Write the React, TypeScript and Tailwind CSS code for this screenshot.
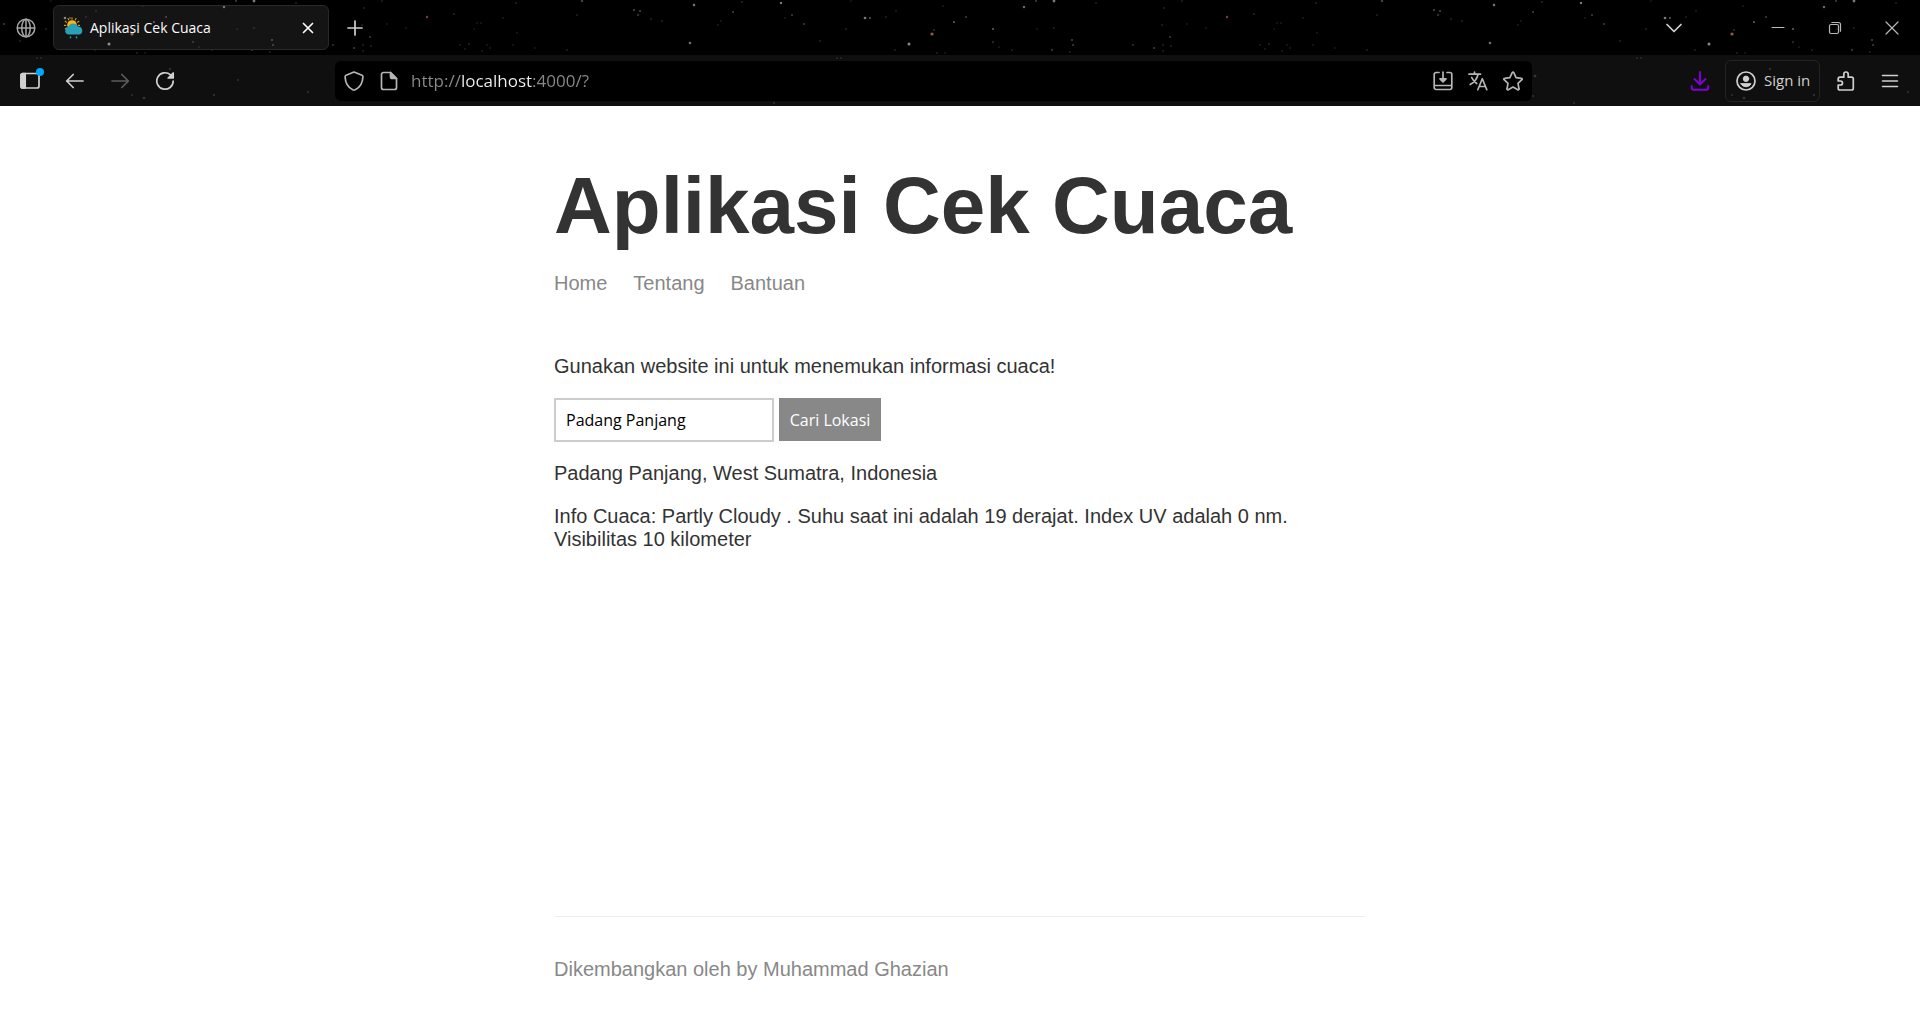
import React, { useState } from "react";

type IconProps = { className?: string; children: React.ReactNode; box?: string };

function Icon({ className = "size-5", children, box = "0 0 20 20" }: IconProps) {
  return (
    <svg
      viewBox={box}
      className={className}
      fill="none"
      stroke="currentColor"
      strokeWidth="1.7"
      strokeLinecap="round"
      strokeLinejoin="round"
      aria-hidden="true"
    >
      {children}
    </svg>
  );
}

// x, y, radius, colour; the sky repeats every 800px
const stars: [number, number, number, string][] = [
  [427, 17, 1.2, "#8a5040"], [387, 24, 0.8, "#333"], [454, 14, 0.8, "#444"], [477, 23, 0.8, "#333"],
  [481, 23, 0.8, "#333"], [503, 18, 0.8, "#3a3a3a"], [516, 3, 0.8, "#444"], [517, 33, 0.8, "#3a3a3a"],
  [474, 29, 0.8, "#2c2c2c"], [577, 15, 0.8, "#444"], [582, 1, 1, "#777"], [460, 45, 0.8, "#3a3a3a"],
  [469, 44, 0.8, "#4a4a4a"], [465, 49, 0.8, "#333"], [482, 51, 0.8, "#333"], [487, 45, 0.8, "#333"],
  [490, 48, 0.8, "#333"], [513, 45, 0.8, "#333"], [535, 48, 0.8, "#333"], [567, 50, 0.8, "#444"],
  [634, 10, 1, "#666"], [640, 11, 0.9, "#666"], [638, 15, 0.9, "#555"], [694, 5, 1.2, "#999"],
  [690, 43, 1.3, "#888"], [651, 19, 0.8, "#444"], [662, 21, 0.8, "#444"], [733, 12, 1, "#555"],
  [742, 2, 0.8, "#444"], [781, 3, 1.2, "#999"], [721, 21, 0.8, "#3a3a3a"], [718, 25, 0.8, "#3a3a3a"],
  [792, 15, 0.9, "#555"], [785, 18, 0.8, "#333"], [4, 24, 0.9, "#555"], [65, 18, 1.3, "#999"],
  [70, 18, 1, "#666"], [86, 17, 0.8, "#444"], [46, 29, 0.8, "#444"], [20, 41, 0.8, "#444"],
  [51, 1, 0.8, "#333"], [96, 11, 0.8, "#3a3a3a"], [143, 6, 0.8, "#3a3a3a"], [154, 22, 1, "#777"],
  [166, 17, 0.9, "#555"], [132, 34, 1.6, "#b5705c"], [134, 30, 0.8, "#666"], [109, 44, 1.5, "#aaa"],
  [95, 50, 0.8, "#444"], [137, 53, 0.8, "#444"], [145, 53, 0.8, "#333"], [193, 29, 1.1, "#777"],
  [193, 42, 0.9, "#444"], [199, 47, 0.8, "#333"], [212, 50, 0.8, "#444"], [224, 7, 1.2, "#888"],
  [236, 1, 0.9, "#555"], [254, 1, 1.4, "#999"], [296, 3, 0.8, "#444"], [254, 28, 0.8, "#444"],
  [237, 29, 0.8, "#333"], [272, 40, 1, "#555"], [273, 45, 0.9, "#555"], [252, 50, 0.9, "#555"],
  [270, 52, 0.8, "#444"], [333, 45, 0.9, "#444"], [354, 48, 0.9, "#555"], [362, 25, 0.8, "#444"],
  [370, 37, 0.9, "#555"], [363, 45, 0.8, "#444"], [371, 46, 0.8, "#444"], [363, 51, 0.8, "#444"],
  [364, 8, 0.8, "#444"], [382, 1, 0.8, "#444"], [406, 28, 0.8, "#333"],
  [238, 80, 1, "#2c2c2c"], [308, 92, 1.1, "#302b2b"], [214, 95, 1.1, "#363636"], [144, 98, 1.3, "#3a302e"],
  [37, 58, 0.9, "#2c2c2c"], [170, 69, 1.1, "#333"], [735, 76, 1.3, "#462f2d"], [132, 95, 1, "#2c2c2c"],
  [41, 58, 0.9, "#2a2a2a"], [733, 96, 1, "#303030"], [774, 103, 1, "#2e2e2e"], [539, 100, 1, "#333"],
];

function StarrySky() {
  return (
    <svg className="pointer-events-none absolute inset-0 size-full" aria-hidden="true">
      <defs>
        <pattern id="sky" width="800" height="106" patternUnits="userSpaceOnUse">
          {stars.map(([x, y, r, fill], i) => (
            <circle key={i} cx={x} cy={y} r={r} fill={fill} opacity="0.8" />
          ))}
        </pattern>
      </defs>
      <rect width="100%" height="100%" fill="url(#sky)" />
    </svg>
  );
}

function WeatherIcon() {
  return (
    <svg viewBox="0 0 20 22" className="h-[22px] w-5" aria-hidden="true">
      <g stroke="#d9a017" strokeWidth="1.1" strokeLinecap="round">
        <path d="M8 2.3V.8M11.3 3l.7-1.4M4.8 3l-.7-1.4M2.5 5.2 1.2 4.3M1.8 8.4H.5M2.5 11l-1.2.7M13.6 5.2l1.2-.9M14.2 8.4h1.4" />
      </g>
      <circle cx="8" cy="8" r="4.8" fill="#fdb515" />
      <path
        d="M4.7 17.6a3.8 3.8 0 0 1-.5-7.5 5.2 5.2 0 0 1 9.6-.6 4.2 4.2 0 0 1 1.8 8.1z"
        fill="#2a9fb8"
      />
      <path d="M6.500 20v.8M12.500 20v.8" stroke="#2a9fb8" strokeWidth="1.5" strokeLinecap="round" />
    </svg>
  );
}

function IconButton({
  label,
  className = "",
  children,
}: {
  label: string;
  className?: string;
  children: React.ReactNode;
}) {
  return (
    <button type="button" aria-label={label} className={`flex shrink-0 items-center justify-center ${className}`}>
      {children}
    </button>
  );
}

function TabStrip() {
  return (
    <div className="relative flex h-[55px] items-center">
      <IconButton label="Workspaces" className="ml-4 size-5 text-[#a5a5a5]">
        <Icon>
          <g strokeWidth="1.5">
            <circle cx="10" cy="10" r="8.800" />
            <ellipse cx="10" cy="10" rx="4.200" ry="8.800" />
            <path d="M1.500 10h17M10 1.200v17.600" />
          </g>
        </Icon>
      </IconButton>
      <div className="ml-[17px] flex h-[45px] w-[276px] items-center rounded-md border border-[#292929] bg-white/8 px-2.5">
        <WeatherIcon />
        <span className="ml-1.5 flex-1 text-sm text-[#fbfbfe]">Aplikasi Cek Cuaca</span>
        <IconButton label="Close tab" className="size-5 text-[#fbfbfe]">
          <Icon>
            <path d="m5.500 5.500 9 9m0-9-9 9" />
          </Icon>
        </IconButton>
      </div>
      <IconButton label="New tab" className="ml-4 size-5 text-[#d0d0d0]">
        <Icon>
          <path d="M10 3v14M3 10h14" />
        </Icon>
      </IconButton>
      <div className="ml-auto flex items-center text-[#b8b8b8]">
        <IconButton label="List all tabs" className="mr-[65px] size-5 text-[#d0d0d0]">
          <Icon>
            <path d="m3 6.500 7 7 7-7" />
          </Icon>
        </IconButton>
        <IconButton label="Minimize" className="h-5 w-[57px]">
          <Icon>
            <path d="M4 9.500h12" strokeWidth="1" />
          </Icon>
        </IconButton>
        <IconButton label="Restore" className="h-5 w-[57px]">
          <Icon>
            <g strokeWidth="1.200">
              <rect x="4.500" y="6.500" width="9" height="9" rx="1.500" />
              <path d="M6.800 4.500h6.700a2 2 0 0 1 2 2v6.700" />
            </g>
          </Icon>
        </IconButton>
        <IconButton label="Close window" className="h-5 w-[57px]">
          <Icon>
            <path d="m4 4 12 12M16 4 4 16" strokeWidth="1.200" />
          </Icon>
        </IconButton>
      </div>
    </div>
  );
}

function AddressBar() {
  const [url, setUrl] = useState("http://localhost:4000/?");
  return (
    <div className="ml-40 flex h-10 flex-1 items-center rounded-md bg-black px-[9px] text-[#b5b5b5]">
      <IconButton label="Tracking protection" className="size-5">
        <Icon>
          <path d="M10 1 18 4.300c.8.400 1 1 .9 1.700-.2 5.800-3 10.500-7.700 12.800q-1.200.5-2.400 0C4.100 16.500 1.300 11.800 1.100 6c0-.7.200-1.300 1-1.700z" />
        </Icon>
      </IconButton>
      <IconButton label="Site information" className="ml-[15px] size-5">
        <Icon>
          <path d="M11.500 1.500H4.500a2 2 0 0 0-2 2v13a2 2 0 0 0 2 2h11a2 2 0 0 0 2-2V7.500z" />
          <path d="M11.500 1.500v4a2 2 0 0 0 2 2h4z" fill="currentColor" />
        </Icon>
      </IconButton>
      <input
        type="text"
        aria-label="Address"
        value={url}
        onChange={(e) => setUrl(e.target.value)}
        className="ml-3 min-w-0 flex-1 bg-[linear-gradient(to_right,#8a8a8a_50px,#f4f4f6_50px,#f4f4f6_121px,#8a8a8a_121px)] bg-clip-text text-[17px] text-transparent outline-none"
      />
      <div className="flex items-center gap-[15px]">
        <IconButton label="Install page as app" className="size-5">
          <Icon>
            <path d="M6 1.500H3A1.800 1.800 0 0 0 1.200 3.300v13.400A1.800 1.800 0 0 0 3 18.500h14a1.800 1.800 0 0 0 1.800-1.800V3.300A1.800 1.800 0 0 0 17 1.500h-3M1.500 14.500h17M10 1v8" />
            <path d="m7 7.800 3 3 3-3z" fill="currentColor" />
          </Icon>
        </IconButton>
        <IconButton label="Translate page" className="size-5">
          <Icon>
            <path d="M1 3.200h11.500M6.500 1v2M10 3.500C9 8 6 11.500 2.200 13.500M3.700 6.500c1 2.500 3 4.500 5 6M9.800 18.700l4.500-11 4.500 11M11.500 15.500h5.700" />
          </Icon>
        </IconButton>
        <IconButton label="Bookmark page" className="size-5">
          <Icon>
            <path d="M9.200 1.700a.9.900 0 0 1 1.600 0l2.300 4.900 5.300.7a.8.800 0 0 1 .5 1.400l-3.900 3.700 1 5.400a.8.800 0 0 1-1.200.9L10 16.100l-4.800 2.600a.8.800 0 0 1-1.200-.9l1-5.400L1.100 8.700a.8.800 0 0 1 .5-1.400l5.300-.7z" />
          </Icon>
        </IconButton>
      </div>
    </div>
  );
}

function Toolbar() {
  return (
    <div className="relative flex h-[51px] items-center bg-white/6 text-[#d0d0d0]">
      <IconButton label="Sidebar" className="relative ml-5 size-5">
        <Icon>
          <rect x="1" y="2.500" width="18" height="14.500" rx="2" />
          <path d="M1 4.500a2 2 0 0 1 2-2h2.200V17H3a2 2 0 0 1-2-2z" fill="currentColor" />
        </Icon>
        <span className="absolute -top-[3px] -right-1 size-2 rounded-full bg-[#00a8f5]" />
      </IconButton>
      <IconButton label="Back" className="ml-[25px] size-5">
        <Icon>
          <path d="M18 10H1.700m6.500-6.500L1.700 10l6.500 6.500" />
        </Icon>
      </IconButton>
      <IconButton label="Forward" className="ml-[25px] size-5 text-[#5e5e5e]">
        <Icon>
          <path d="M2 10h16.300m-6.500-6.500 6.500 6.500-6.500 6.500" />
        </Icon>
      </IconButton>
      <IconButton label="Reload" className="ml-[25px] size-5">
        <Icon>
          <path d="M18.200 10a8.200 8.200 0 1 1-2.700-6.100l1.300 1.300" />
          <path d="M18.200 2v5h-5z" fill="currentColor" />
        </Icon>
      </IconButton>
      <AddressBar />
      <IconButton label="Downloads" className="ml-[158px] size-5 text-[#8000d7]">
        <Icon>
          <path d="M10 1v12M4.500 8l5.500 5.500L15.500 8M1.700 15v1.700a2 2 0 0 0 2 2h12.600a2 2 0 0 0 2-2V15" strokeWidth="1.900" />
        </Icon>
      </IconButton>
      <button
        type="button"
        className="ml-[15px] flex h-[42px] w-[95px] shrink-0 items-center gap-2 rounded-md border border-[#242424] pl-2.5 text-[15px] whitespace-nowrap"
      >
        <Icon className="size-5 shrink-0">
          <circle cx="10" cy="10" r="9" />
          <circle cx="10" cy="7.800" r="2.700" fill="currentColor" strokeWidth="1" />
          <path d="M5 12.700h10c-1 2-2.800 3-5 3s-4-1-5-3z" fill="currentColor" strokeWidth="1" />
        </Icon>
        Sign in
      </button>
      <IconButton label="Extensions" className="ml-4 size-5">
        <Icon>
          <path d="M4 19h11.500a1.800 1.800 0 0 0 1.800-1.800V8a1.800 1.800 0 0 0-1.800-1.800h-3.300V3.200a2.200 2.200 0 0 0-4.400 0v3H4A1.800 1.800 0 0 0 2.200 8v2h2.300a2 2 0 0 1 0 4H2.200v3.200A1.800 1.800 0 0 0 4 19z" />
        </Icon>
      </IconButton>
      <IconButton label="Menu" className="mr-5 ml-6 size-5">
        <Icon>
          <path d="M2.500 4.500h15M2.500 10h15M2.500 15.500h15" strokeWidth="1.500" />
        </Icon>
      </IconButton>
    </div>
  );
}

function WeatherPage() {
  const [place, setPlace] = useState("Padang Panjang");
  return (
    <div className="mx-auto flex w-full max-w-[812px] flex-1 flex-col pt-[54px] text-xl leading-[23px] text-[#333] [font-family:'Liberation_Sans',Arial,sans-serif]">
      <main className="flex-1">
        <h1 className="text-[80px] leading-[92px] font-bold">Aplikasi Cek Cuaca</h1>
        <nav className="mt-5 flex gap-[26px] text-[#888]">
          <a href="#home">Home</a>
          <a href="#tentang">Tentang</a>
          <a href="#bantuan">Bantuan</a>
        </nav>
        <p className="mt-[60px]">Gunakan website ini untuk menemukan informasi cuaca!</p>
        <form
          className="mt-5 flex gap-[5px] text-base [font-family:'Open_Sans','Noto_Sans',sans-serif]"
          onSubmit={(e) => e.preventDefault()}
        >
          <input
            type="text"
            aria-label="Lokasi"
            value={place}
            onChange={(e) => setPlace(e.target.value)}
            className="h-11 w-[220px] border-2 border-[#ccc] px-2.5 text-black outline-none"
          />
          <button type="submit" className="h-[43px] w-[102px] bg-[#888] whitespace-nowrap text-white">
            Cari Lokasi
          </button>
        </form>
        <p className="mt-5">Padang Panjang, West Sumatra, Indonesia</p>
        <p className="mt-5">
          Info Cuaca: Partly Cloudy . Suhu saat ini adalah 19 derajat. Index UV adalah 0 nm. Visibilitas 10 kilometer
        </p>
      </main>
      <footer className="border-t border-[#eee] pt-[41px] pb-[39px] text-[#888]">
        Dikembangkan oleh by Muhammad Ghazian
      </footer>
    </div>
  );
}

export default function App() {
  return (
    <div className="flex min-h-screen flex-col bg-white">
      <header className="relative bg-black [font-family:'Open_Sans','Noto_Sans',sans-serif]">
        <StarrySky />
        <TabStrip />
        <Toolbar />
      </header>
      <WeatherPage />
    </div>
  );
}
